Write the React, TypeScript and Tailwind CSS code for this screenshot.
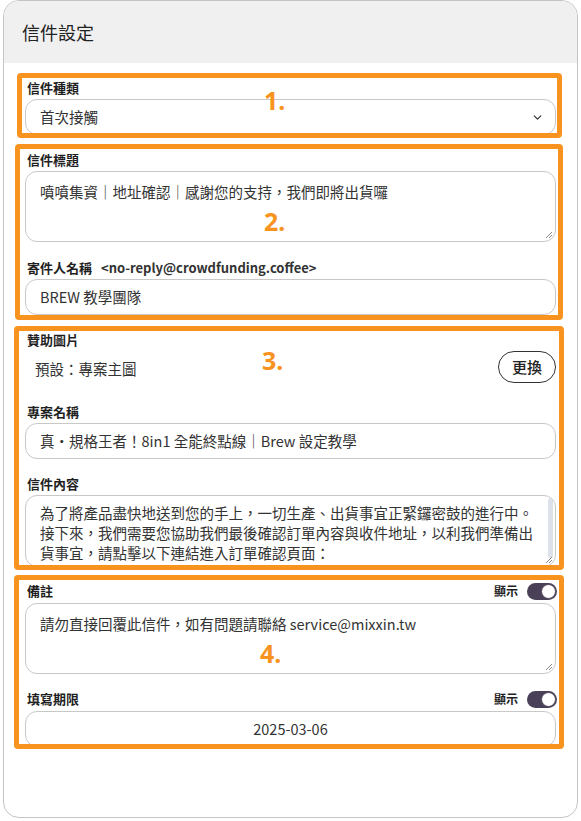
import { ChevronDown } from "lucide-react"

const font = "font-['Noto_Sans_CJK_TC','Noto_Sans',sans-serif]"

function Label({ children }: { children: React.ReactNode }) {
  return <div className="pl-[2px] text-[13px] font-bold leading-[18px] text-[#1f1f1f]">{children}</div>
}

function Toggle() {
  return (
    <div className="flex items-center gap-[9px] -mr-[1px]">
      <span className="text-[12px] font-bold text-[#1f1f1f]">顯示</span>
      <div className="relative h-[17px] w-[30px] rounded-full bg-[#4a4058]">
        <div className="absolute right-[1px] top-[1px] h-[15px] w-[15px] rounded-full border border-[#4a4058] bg-white" />
      </div>
    </div>
  )
}

function Grip() {
  return (
    <svg className="absolute bottom-[2px] right-[2px]" width="8" height="8" viewBox="0 0 8 8">
      <path d="M7 1L1 7M7 4L4 7" stroke="#8a8a8a" strokeWidth="1" />
    </svg>
  )
}

export default function App() {
  return (
    <div className={`relative h-[821px] w-[581px] bg-white ${font}`}>
      <div className="mx-[3px] h-[818px] overflow-hidden rounded-[16px] border border-[#c4c4c4] bg-white">
        {/* header */}
        <div className="flex h-[62px] items-center bg-[#f0f0f0] pl-[18px] text-[18px] text-[#222]">信件設定</div>

        {/* body */}
        <div className="h-[684px] overflow-hidden px-[21px] pt-[16px] text-[#333]">
          <Label>信件種類</Label>
          <div className="mt-[2px] flex h-[36px] items-center justify-between rounded-[12px] border border-[#c8c8c8] pl-[14px] pr-[11px] text-[14.5px]">
            <span>首次接觸</span>
            <ChevronDown size={13} strokeWidth={2.2} className="text-[#333]" />
          </div>

          <div className="mt-[16px]">
            <Label>信件標題</Label>
          </div>
          <div className="relative mt-[2px] h-[71px] rounded-[12px] border border-[#c8c8c8] px-[14px] pt-[8px] text-[14.5px] leading-[23px]">
            噴噴集資｜地址確認｜感謝您的支持，我們即將出貨囉
            <Grip />
          </div>

          <div className="mt-[17px] flex items-center pl-[2px] text-[13px] font-bold leading-[18px] text-[#1f1f1f]">
            寄件人名稱
            <span className="ml-[9px] font-semibold text-[#333]">&lt;no-reply@crowdfunding.coffee&gt;</span>
          </div>
          <div className="mt-[2px] flex h-[36px] items-center rounded-[12px] border border-[#c8c8c8] px-[14px] text-[14.5px]">
            BREW 教學團隊
          </div>

          <div className="mt-[16px]">
            <Label>贊助圖片</Label>
          </div>
          <div className="mt-[2px] flex h-[32px] items-center justify-between">
            <span className="pl-[10px] pt-[4px] text-[14.5px]">預設：專案主圖</span>
            <button className="h-[32px] rounded-full border border-[#333] px-[13px] text-[15px] font-medium text-[#222]">
              更換
            </button>
          </div>

          <div className="mt-[20px]">
            <Label>專案名稱</Label>
          </div>
          <div className="mt-[2px] flex h-[36px] items-center rounded-[12px] border border-[#c8c8c8] px-[14px] text-[14.5px]">
            真・規格王者！8in1 全能終點線｜Brew 設定教學
          </div>

          <div className="mt-[16px]">
            <Label>信件內容</Label>
          </div>
          <div className="relative mt-[2px] h-[72px] overflow-hidden rounded-[12px] border border-[#c8c8c8] pl-[14px] pr-[10px] pt-[7px] text-[14.5px] leading-[20px]">
            <p>為了將產品盡快地送到您的手上，一切生產、出貨事宜正緊鑼密鼓的進行中。</p>
            <p>接下來，我們需要您協助我們最後確認訂單內容與收件地址，以利我們準備出</p>
            <p>貨事宜，請點擊以下連結進入訂單確認頁面：</p>
            <div className="absolute right-[2px] top-[2px] h-[60px] w-[5px] rounded-full bg-[#dde2ea]" />
            <Grip />
          </div>

          <div className="mt-[14px] flex h-[20px] items-center justify-between">
            <Label>備註</Label>
            <Toggle />
          </div>
          <div className="relative mt-[2px] h-[71px] rounded-[12px] border border-[#c8c8c8] px-[14px] pt-[8px] text-[14.5px] leading-[23px]">
            請勿直接回覆此信件，如有問題請聯絡 service@mixxin.tw
            <Grip />
          </div>

          <div className="mt-[15px] flex h-[20px] items-center justify-between">
            <Label>填寫期限</Label>
            <Toggle />
          </div>
          <div className="mt-[2px] flex h-[36px] items-center justify-center rounded-[12px] border border-[#c8c8c8] text-[14.5px]">
            2025-03-06
          </div>
        </div>
      </div>

      {/* annotation boxes */}
      <div className="pointer-events-none absolute left-[17px] top-[73px] h-[65px] w-[545px] rounded-[4px] border-[5px] border-[#f7931e]" />
      <div className="pointer-events-none absolute left-[15px] top-[144px] h-[176px] w-[548px] rounded-[4px] border-[5px] border-[#f7931e]" />
      <div className="pointer-events-none absolute left-[14px] top-[326px] h-[244px] w-[550px] rounded-[4px] border-[5px] border-[#f7931e]" />
      <div className="pointer-events-none absolute left-[14px] top-[575px] h-[174px] w-[550px] rounded-[4px] border-[5px] border-[#f7931e]" />

      <span className="pointer-events-none absolute left-[264px] top-[88px] font-['Noto_Sans',sans-serif] text-[25px] font-bold leading-none text-[#f7931e]">1.</span>
      <span className="pointer-events-none absolute left-[264px] top-[209px] font-['Noto_Sans',sans-serif] text-[25px] font-bold leading-none text-[#f7931e]">2.</span>
      <span className="pointer-events-none absolute left-[262px] top-[348px] font-['Noto_Sans',sans-serif] text-[25px] font-bold leading-none text-[#f7931e]">3.</span>
      <span className="pointer-events-none absolute left-[260px] top-[641px] font-['Noto_Sans',sans-serif] text-[25px] font-bold leading-none text-[#f7931e]">4.</span>
    </div>
  )
}
